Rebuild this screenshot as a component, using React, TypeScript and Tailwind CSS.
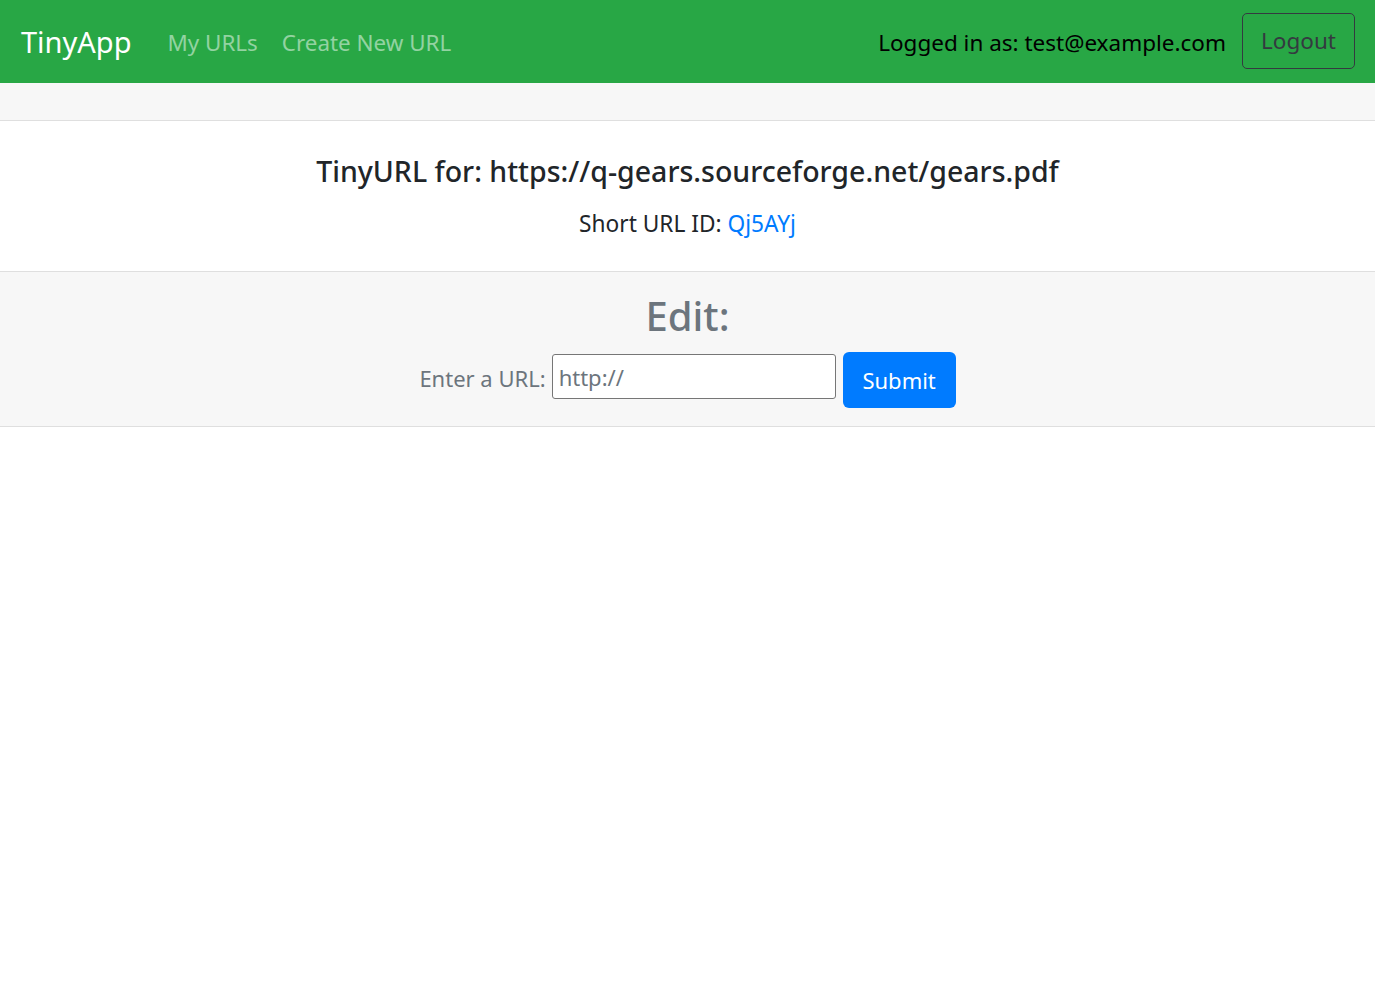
import React from 'react';

const App: React.FC = () => {
    return (
        <div className="min-h-screen bg-white font-['Noto_Sans',sans-serif] text-[#212529]">
            {/* navbar */}
            <nav className="h-[83px] bg-[#28a745] flex items-center pl-[21px] pr-[20px]">
                <a className="text-[29px] text-white leading-none mr-[36px]">TinyApp</a>
                <div className="flex items-center gap-[24px] pt-[3px] text-[22.4px] text-white/50">
                    <a>My URLs</a>
                    <a>Create New URL</a>
                </div>
                <div className="ml-auto flex items-center">
                    <span className="pt-[2px] text-[22.5px] text-black">Logged in as: test@example.com</span>
                    <button className="ml-[16px] mb-[2px] h-[56px] w-[113px] border border-[#343a40] rounded-[5px] text-[22.5px] text-[#343a40]">
                        Logout
                    </button>
                </div>
            </nav>

            {/* card header */}
            <div className="h-[38px] bg-[#f7f7f7] border-b border-[#dfdfdf]"></div>

            {/* card body */}
            <div className="h-[150px] flex flex-col items-center pt-[26px]">
                <h5 className="text-[28.5px] font-medium leading-[48px]">
                    TinyURL for: https://q-gears.sourceforge.net/gears.pdf
                </h5>
                <p className="mt-[13px] text-[22.7px] leading-[32px]">
                    Short URL ID: <a className="text-[#007bff]">Qj5AYj</a>
                </p>
            </div>

            {/* card footer */}
            <div className="h-[156px] bg-[#f7f7f7] border-y border-[#dfdfdf] flex flex-col items-center pt-[18px]">
                <h3 className="text-[40px] font-medium text-[#6c757d] leading-[52px]">Edit:</h3>
                <form className="mt-[10px] flex items-start">
                    <label className="mt-[10px] text-[22px] leading-[32px] text-[#6c757d] mr-[6px]">Enter a URL:</label>
                    <input
                        type="text"
                        placeholder="http://"
                        className="mt-[2px] w-[284px] h-[45px] border border-[#767676] rounded-[3px] bg-white px-[6px] text-[22px] text-[#212529] placeholder:text-[#6c757d] outline-none"
                    />
                    <button
                        type="button"
                        className="ml-[7px] h-[56px] w-[113px] bg-[#007bff] rounded-[6px] text-white text-[22px]"
                    >
                        Submit
                    </button>
                </form>
            </div>
        </div>
    );
};

export default App;
